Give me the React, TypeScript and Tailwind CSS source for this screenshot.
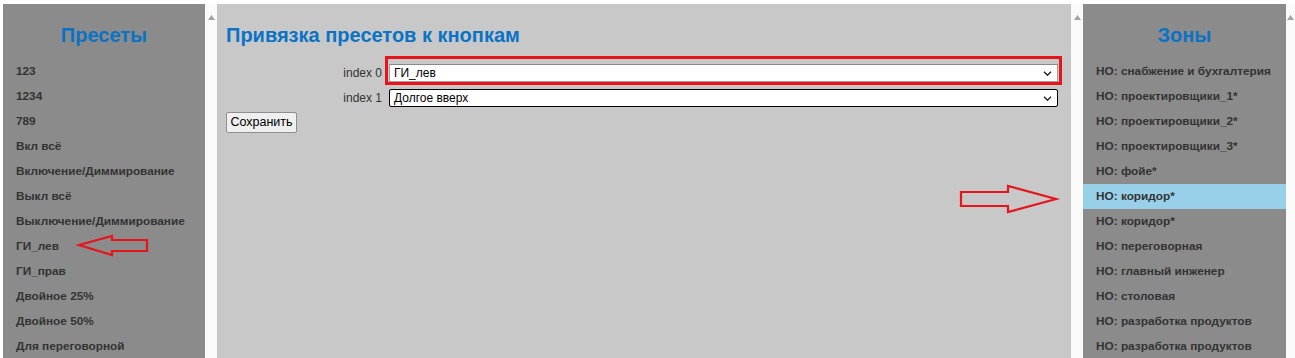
import React from 'react';

const presets = [
  '123',
  '1234',
  '789',
  'Вкл всё',
  'Включение/Диммирование',
  'Выкл всё',
  'Выключение/Диммирование',
  'ГИ_лев',
  'ГИ_прав',
  'Двойное 25%',
  'Двойное 50%',
  'Для переговорной',
];

const zones = [
  'НО: снабжение и бухгалтерия',
  'НО: проектировщики_1*',
  'НО: проектировщики_2*',
  'НО: проектировщики_3*',
  'НО: фойе*',
  'НО: коридор*',
  'НО: коридор*',
  'НО: переговорная',
  'НО: главный инженер',
  'НО: столовая',
  'НО: разработка продуктов',
  'НО: разработка продуктов',
];

function ScrollStrip({ width }: { width: string }) {
  return (
    <div className={`${width} h-full bg-[#fafafa] flex justify-center pt-[11px] shrink-0`}>
      <svg width="7" height="5" viewBox="0 0 7 5">
        <path d="M3.5 0 L7 5 L0 5 Z" fill="#a3a3a3" />
      </svg>
    </div>
  );
}

function Chevron() {
  return (
    <svg width="9" height="5" viewBox="0 0 9 5" className="shrink-0">
      <path d="M1 0.8 L4.5 4.2 L8 0.8" fill="none" stroke="#222" strokeWidth="1.4" />
    </svg>
  );
}

function FakeSelect({ value, focused }: { value: string; focused?: boolean }) {
  return (
    <div
      className={`w-[669px] h-[18px] bg-white flex items-center justify-between pl-[4px] pr-[5px] text-[12px] text-black ${
        focused ? 'border border-black rounded-[2px]' : 'border border-[#a0a0a0] border-t-[#8a8a8a]'
      }`}
    >
      <span className="leading-none">{value}</span>
      <Chevron />
    </div>
  );
}

export default function App() {
  return (
    <div
      className="relative w-[1295px] h-[358px] bg-white flex pt-[4px] pl-[3px] overflow-hidden"
      style={{ fontFamily: '"Liberation Sans", Arial, sans-serif' }}
    >
      {/* Пресеты */}
      <div className="w-[202px] h-full bg-[#8b8b8b] shrink-0">
        <h2 className="text-center text-[20px] leading-[20px] font-bold text-[#0b73c6] pt-[21px] pb-[14px]">
          Пресеты
        </h2>
        {presets.map((p, i) => (
          <div key={i} className="h-[25px] flex items-center px-[13px] text-[11.8px] font-bold text-[#333]">
            {p}
          </div>
        ))}
      </div>
      <ScrollStrip width="w-[12px]" />

      {/* центр */}
      <div className="w-[854px] h-full bg-[#c8c8c8] shrink-0 pl-[9px]">
        <h1 className="text-[20px] leading-[20px] font-bold text-[#0b73c6] pt-[21px] pb-[19px]">
          Привязка пресетов к кнопкам
        </h1>
        <div className="flex flex-col gap-[7px]">
          <div className="relative flex items-center">
            <span className="w-[156px] text-right text-[12px] text-[#333]">index 0</span>
            <div className="ml-[7px]">
              <FakeSelect value="ГИ_лев" />
            </div>
            <div className="absolute left-[159px] top-[-8px] w-[677px] h-[29px] border-[3px] border-[#e8141c]" />
          </div>
          <div className="flex items-center">
            <span className="w-[156px] text-right text-[12px] text-[#333]">index 1</span>
            <div className="ml-[7px]">
              <FakeSelect value="Долгое вверх" focused />
            </div>
          </div>
        </div>
        <button className="mt-[5px] h-[21px] w-[71px] border border-[#8f8f8f] bg-[#efefef] rounded-[2px] text-[12.5px] text-black">
          Сохранить
        </button>
      </div>
      <ScrollStrip width="w-[12px]" />

      {/* Зоны */}
      <div className="w-[203px] h-full bg-[#8b8b8b] shrink-0">
        <h2 className="text-center text-[20px] leading-[20px] font-bold text-[#0b73c6] pt-[21px] pb-[14px]">
          Зоны
        </h2>
        {zones.map((z, i) => (
          <div
            key={i}
            className={`h-[25px] flex items-center px-[13px] text-[11.8px] font-bold text-[#333] whitespace-nowrap ${
              i === 5 ? 'bg-[#98d0ea]' : ''
            }`}
          >
            {z}
          </div>
        ))}
      </div>
      <ScrollStrip width="w-[9px]" />

      {/* стрелки-пометки */}
      <svg className="absolute left-0 top-0 pointer-events-none" width="1295" height="358">
        <polygon
          points="79,245 112,236 112,240 147,240 147,251 112,251 112,255"
          fill="none"
          stroke="#e8141c"
          strokeWidth="2.2"
          strokeLinejoin="miter"
        />
        <polygon
          points="961,192 1008,192 1008,186 1056,199 1008,212 1008,206 961,206"
          fill="none"
          stroke="#e8141c"
          strokeWidth="2.2"
          strokeLinejoin="miter"
        />
      </svg>
    </div>
  );
}
